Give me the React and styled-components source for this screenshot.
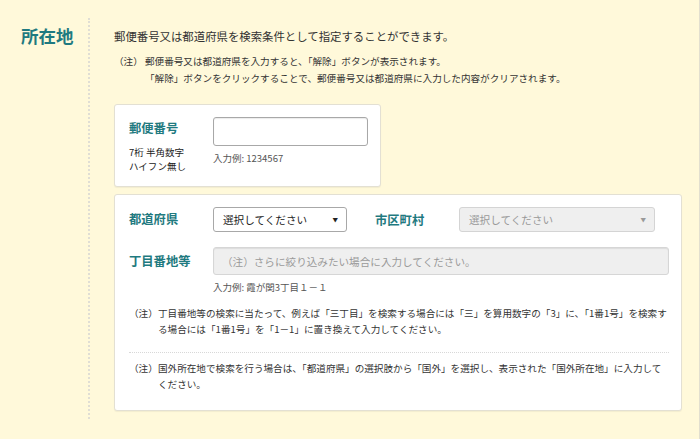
import styled, { createGlobalStyle } from "styled-components";

const GlobalStyle = createGlobalStyle`
  html, body {
    margin: 0;
    padding: 0;
    background: #fff9da;
  }
  body {
    font-family: "Noto Sans CJK JP", "Noto Sans", sans-serif;
    color: #333;
  }
  * {
    box-sizing: border-box;
  }
`;

const teal = "#1f7a80";

export default function App() {
  return (
    <>
      <GlobalStyle />
      <Page>
        <Section>
          <TitleCol>
            <Title>所在地</Title>
          </TitleCol>
          <Body>
            <Lead>郵便番号又は都道府県を検索条件として指定することができます。</Lead>
            <TopNotes>
              <NoteRow $mark={31}>
                <span className="mark">（注）</span>
                <div>
                  <div>郵便番号又は都道府県を入力すると、「解除」ボタンが表示されます。</div>
                  <div>「解除」ボタンをクリックすることで、郵便番号又は都道府県に入力した内容がクリアされます。</div>
                </div>
              </NoteRow>
            </TopNotes>

            <PostalCard>
              <div>
                <Label>郵便番号</Label>
                <SubText>
                  7桁 半角数字
                  <br />
                  ハイフン無し
                </SubText>
              </div>
              <div>
                <TextInput $w={155} $h={29} />
                <Example>入力例: 1234567</Example>
              </div>
            </PostalCard>

            <AddressCard>
              <SelectRow>
                <Label>都道府県</Label>
                <Select $w={134}>
                  <span>選択してください</span>
                  <Arrow>▼</Arrow>
                </Select>
                <Label>市区町村</Label>
                <Select $w={196} $disabled>
                  <span>選択してください</span>
                  <Arrow $disabled>▼</Arrow>
                </Select>
              </SelectRow>
              <BlockRow>
                <Label>丁目番地等</Label>
                <div>
                  <TextInput
                    $w={456}
                    $h={28}
                    $disabled
                    placeholder="（注）さらに絞り込みたい場合に入力してください。"
                  />
                  <Example>入力例: 霞が関3丁目１－１</Example>
                </div>
              </BlockRow>
              <CardNote $mark={29}>
                <span className="mark">（注）</span>
                <div>
                  丁目番地等の検索に当たって、例えば「三丁目」を検索する場合には「三」を算用数字の「3」に、「1番1号」を検索する場合には「1番1号」を「1－1」に置き換えて入力してください。
                </div>
              </CardNote>
              <Separator />
              <CardNote $mark={29}>
                <span className="mark">（注）</span>
                <div>
                  国外所在地で検索を行う場合は、「都道府県」の選択肢から「国外」を選択し、表示された「国外所在地」に入力してください。
                </div>
              </CardNote>
            </AddressCard>
          </Body>
        </Section>
      </Page>
    </>
  );
}

const Page = styled.div`
  width: 700px;
  height: 439px;
  padding-top: 18px;
  border-right: 1px solid #e2dfcf;
`;

const Section = styled.div`
  display: flex;
`;

const TitleCol = styled.div`
  width: 88px;
  padding: 6px 0 0 21px;
`;

const Title = styled.h2`
  margin: 0;
  font-size: 17.5px;
  line-height: 24px;
  font-weight: 700;
  color: ${teal};
`;

const Body = styled.div`
  border-left: 2px dotted #e0ded4;
  padding: 9px 0 8px 24px;
`;

const Lead = styled.p`
  margin: 0;
  font-size: 11.4px;
  line-height: 18px;
  color: #333;
`;

const NoteRow = styled.div`
  display: flex;
  font-size: 9.6px;
  line-height: 17px;
  color: #333;
  .mark {
    flex: 0 0 ${(p) => p.$mark}px;
  }
`;

const TopNotes = styled.div`
  margin-top: 8px;
`;

const Card = styled.div`
  background: #fff;
  border: 1px solid #e3e0d3;
  border-radius: 3px;
  box-shadow: 0 1px 1px rgba(0, 0, 0, 0.05);
`;

const PostalCard = styled(Card)`
  width: 267px;
  height: 83px;
  margin-top: 17px;
  padding: 12px 0 0 14px;
  display: grid;
  grid-template-columns: 84px 155px;
`;

const AddressCard = styled(Card)`
  width: 568px;
  margin-top: 7px;
  padding: 12px 12px 18px 14px;
`;

const Label = styled.div`
  font-size: 12.3px;
  line-height: 18px;
  font-weight: 700;
  color: ${teal};
  margin-top: 2px;
`;

const SubText = styled.div`
  margin-top: 8px;
  font-size: 9.5px;
  line-height: 14px;
  color: #222;
`;

const TextInput = styled.input`
  display: block;
  width: ${(p) => p.$w}px;
  height: ${(p) => p.$h}px;
  margin: 0;
  padding: 0 8px;
  border: 1px solid ${(p) => (p.$disabled ? "#d6d6d6" : "#a8a8a8")};
  border-radius: 3px;
  background: ${(p) => (p.$disabled ? "#efefef" : "#fff")};
  box-shadow: inset 0 1px 1px rgba(0, 0, 0, 0.08);
  font-family: inherit;
  font-size: 10.6px;
  outline: none;
  &::placeholder {
    color: #9a9a9a;
  }
`;

const Example = styled.div`
  margin-top: 5px;
  font-size: 9.5px;
  line-height: 14px;
  color: #555;
`;

const SelectRow = styled.div`
  display: grid;
  grid-template-columns: 84px 134px 28px 84px 196px;
  align-items: center;
  & > :nth-child(3) {
    grid-column: 4;
    margin-top: 0;
  }
  & > :first-child {
    margin-top: -2px;
  }
`;

const Select = styled.div`
  position: relative;
  width: ${(p) => p.$w}px;
  height: 25px;
  padding-left: 9px;
  display: flex;
  align-items: center;
  border: 1px solid ${(p) => (p.$disabled ? "#d4d4d4" : "#a8a8a8")};
  border-radius: 3px;
  background: ${(p) => (p.$disabled ? "#efefef" : "#fff")};
  font-size: 10.6px;
  color: ${(p) => (p.$disabled ? "#999" : "#222")};
`;

const Arrow = styled.span`
  position: absolute;
  right: 8px;
  top: 8px;
  font-size: 5.5px;
  line-height: 8px;
  color: ${(p) => (p.$disabled ? "#999" : "#222")};
`;

const BlockRow = styled.div`
  display: grid;
  grid-template-columns: 84px 456px;
  margin-top: 15px;
  & > :first-child {
    margin-top: 5px;
  }
`;

const CardNote = styled(NoteRow)`
  line-height: 16px;
  margin-top: 11px;
  width: 540px;
`;

const Separator = styled.div`
  width: 540px;
  margin-top: 15px;
  border-top: 1px dotted #d8d8d8;
  & + ${CardNote} {
    margin-top: 7px;
  }
`;
